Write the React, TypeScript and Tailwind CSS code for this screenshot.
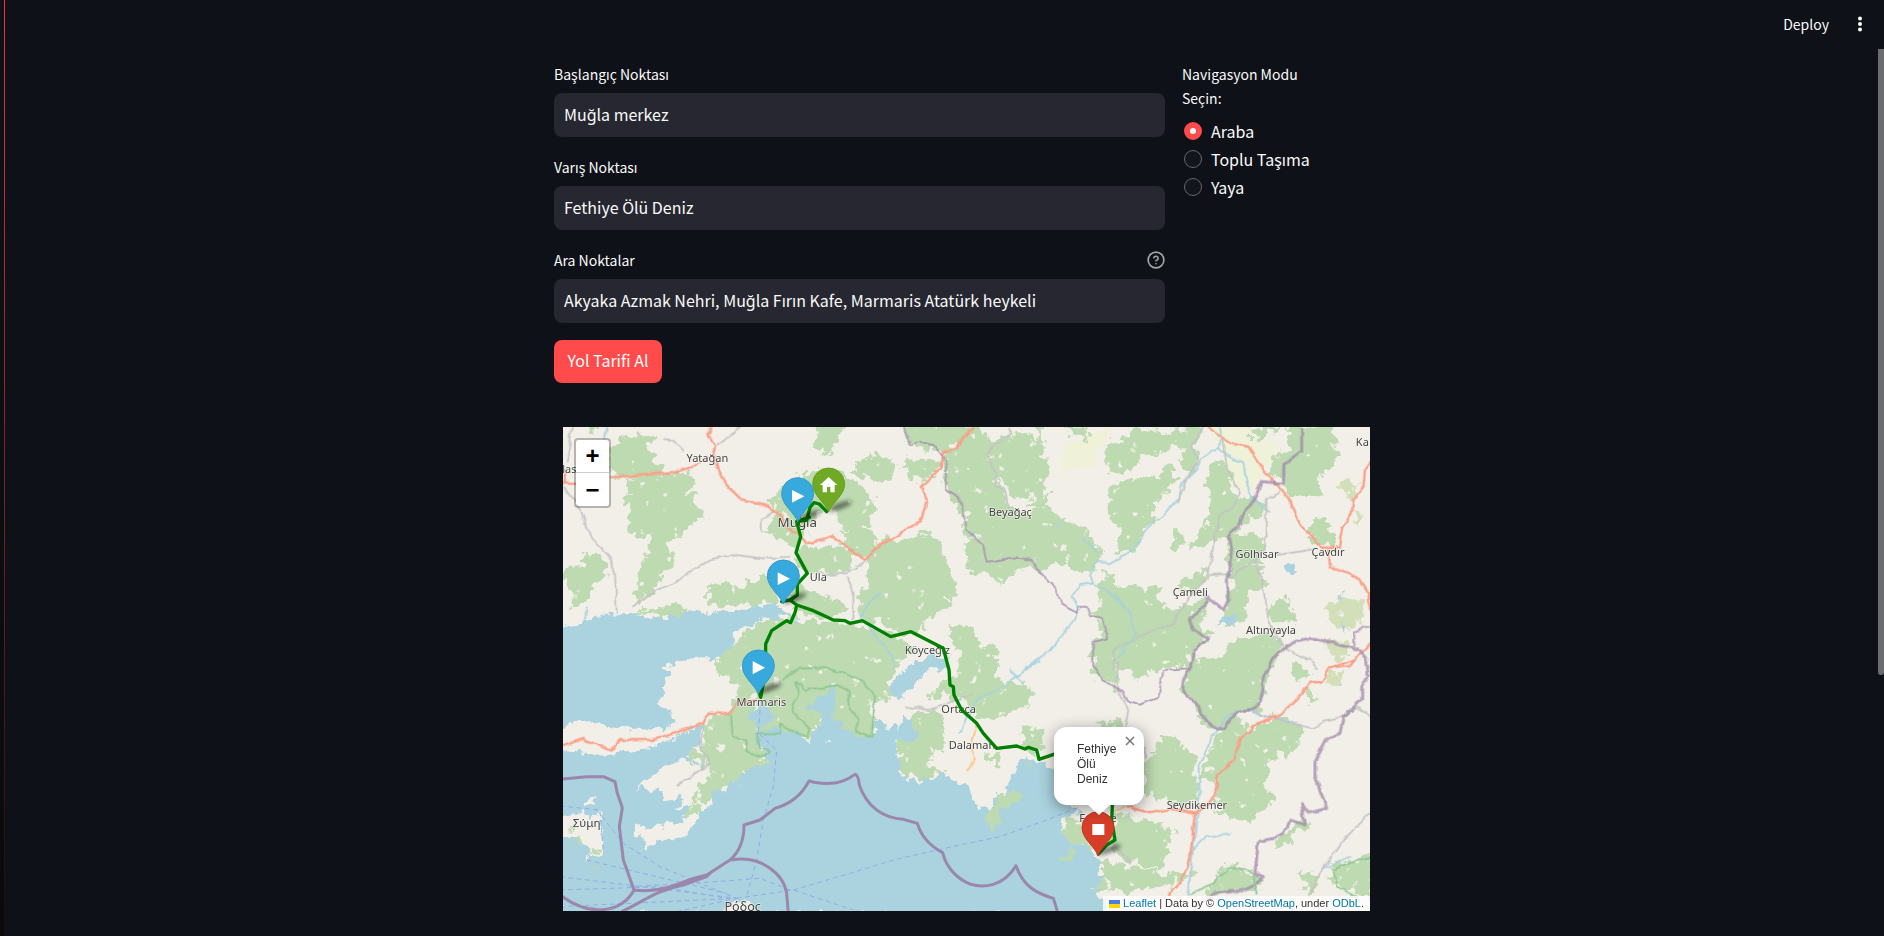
import React, { useState } from "react";

type Quad = [number, number, string];

const forests: Quad[] = [
  [0, 0, "M150,85L180,60L240,45L290,50L260,85L285,130L315,160L250,170L150,165Z M205,180L290,170L385,165L395,200L365,235L400,230L435,300L380,315L350,345L325,340L320,380L340,400L335,430L300,450L290,500L240,545L225,520L245,470L260,400L285,350L205,335L215,270L200,240Z M75,405L120,410L145,440L110,490L65,555L30,560L45,510L10,480L10,455L75,450Z M770,21L850,21L835,60L805,95L765,85L775,50Z"],
  [0, 0, "M885,150L925,110L1015,130L985,175L920,175Z M1030,145L1060,120L1140,130L1130,165L1060,175Z M690,190L770,150L850,165L905,210L940,250L925,310L880,330L840,310L830,260L760,280L720,380L680,370L620,330L650,300L640,240Z M850,335L895,325L930,335L965,375L940,410L900,410L850,370Z M730,385L870,390L880,450L800,455L745,450L700,440Z"],
  [0, 0, "M930,410L975,355L1050,360L1100,340L1140,360L1150,430L1190,490L1160,560L1100,590L1080,630L1020,640L960,600L890,590L900,520L935,480Z M450,500L560,500L590,475L640,475L650,545L540,555L445,560Z M700,500L760,520L830,540L860,570L800,590L700,560Z M240,575L370,560L375,590L300,592Z M90,21L110,21L100,50Z"],
  [0, 0, "M520,670L580,620L650,595L720,605L860,610L980,640L1060,680L985,780L1000,820L930,850L950,960L900,960L830,920L790,880L750,960L660,930L580,920L600,810L530,850L540,790L480,760L470,720Z M1030,21L1230,21L1230,60L1150,110L1120,75L1050,70Z M1155,120L1230,60L1230,350L1210,280L1160,210Z M1170,620L1230,610L1230,700L1190,690Z"],
  [0, 720, "M440,170L500,170L520,130L560,100L590,200L600,260L635,300L620,320L570,330L540,360L480,380L440,420L420,450L370,470L440,370L460,320L430,270Z M385,260L430,290L440,320L380,290Z M1110,100L1150,60L1230,40L1230,110L1120,110Z M1060,170L1100,150L1150,170L1150,250L1090,320L1150,340L1080,360L1060,330L1030,350L1010,300L1040,290L1010,250Z"],
  [1200, 0, "M0,21L60,21L90,70L80,110L110,190L130,240L180,290L260,265L310,300L370,330L425,400L400,450L360,450L290,415L260,445L180,440L150,460L120,490L90,465L25,450L20,350L0,260Z M0,615L40,620L50,680L105,685L110,750L0,750Z M90,75L150,55L190,40L240,80L265,160L240,230L170,235L140,190L100,160Z M235,21L250,80L230,90Z M320,21L375,21L380,60Z M200,255L270,222L250,262Z"],
  [1200, 0, "M480,60L530,30L620,40L720,21L700,90L650,80L600,90L540,100L520,150L445,155L440,80Z M445,200L560,170L600,190L620,210L580,250L560,330L520,390L470,390L490,320L450,280Z M600,170L620,135L655,180L610,195Z M660,110L690,80L720,120L690,150Z M740,180L770,130L790,130L820,200L830,240L880,240L920,260L840,320L800,350L745,330L760,250Z M870,21L950,21L920,50L870,50Z"],
  [1200, 0, "M985,21L1120,21L1125,130L1060,190L1090,220L1000,230L970,180L930,160L930,120L990,90Z M1060,310L1090,300L1125,340L1120,370L1060,375Z M640,340L660,330L670,380L640,375Z M690,370L740,320L800,310L780,350L700,385Z M810,345L905,350L905,420L850,440L810,470Z M830,450L900,440L915,490L860,520L850,610L800,610L800,560Z M920,570L980,540L1010,600L940,610Z M650,500L740,445L735,480L690,510Z"],
  [1200, 0, "M430,460L480,500L600,510L570,540L640,570L700,560L740,530L720,600L745,650L700,690L690,740L620,740L590,750L410,750L395,670L440,650L410,580Z M800,690L850,650L940,650L970,680L930,750L760,750Z"],
  [1200, 720, "M0,0L110,0L110,60L200,80L215,120L170,150L100,180L60,180L20,130L0,100Z M700,0L940,0L915,60L900,140L830,155L790,210L730,190L690,110L670,70Z M400,0L465,0L470,80L410,50Z M480,0L580,0L560,50L520,40Z M1000,10L1040,40L1010,60Z M1050,90L1070,130L1045,120Z M800,170L850,180L870,220L940,170L1000,190L1030,210L1000,260L930,290L910,370L940,420L870,480L780,460L770,350L720,350L750,280Z"],
  [1200, 720, "M600,230L650,240L700,290L710,420L640,430L560,400L550,300L600,270Z M410,190L480,180L490,200Z M470,460L520,480L560,490L640,510L620,560L600,630L500,600L450,560Z M430,610L500,620L620,650L700,640L590,680L500,690L450,680L400,690L430,650Z M320,480L360,480L390,560L310,540Z M950,530L1040,480L1040,500L950,560Z M740,700L780,640L810,620L880,640L900,660L860,690L760,700Z M1110,630L1230,590L1230,710L1170,690L1130,670Z M1020,640L1070,650L1070,690L1040,700Z M180,210L240,200L240,280L200,260Z M80,285L120,280L110,315Z"],
];

const scrub: Quad[] = [
  [1200, 0, "M1095,560L1140,530L1200,535L1215,580L1180,625L1130,620L1095,590Z M1100,670L1160,660L1170,700L1140,715L1100,700Z M1135,185L1195,185L1170,250L1145,215Z M1180,260L1210,290L1190,315Z"],
  [1200, 720, "M1105,40L1150,40L1145,75L1110,70Z"],
];

const farmland: Quad[] = [
  [1200, 0, "M370,50L450,25L440,60L410,90L405,140L320,145L310,175L300,120L320,70L370,60Z M740,21L870,21L870,60L960,70L925,130L890,200L850,220L810,180L790,90Z"],
];

const waters: Quad[] = [
  [0, 0, "M0,635L50,615L95,590L160,590L210,580L260,590L330,592L370,592L375,575L420,575L500,580L570,565L660,550L672,590L600,600L550,615L520,640L525,670L480,710L380,715L310,740L335,770L310,790L325,815L295,840L330,870L345,905L290,930L240,925L150,915L60,905L0,930Z"],
  [0, 0, "M0,980L60,1000L130,1010L210,990L290,975L330,960L345,970L370,935L430,920L420,950L425,990L395,975L380,1010L440,1035L360,1020L290,1055L235,1105L310,1110L325,1150L370,1120L350,1165L385,1165L370,1200L300,1222L225,1220L255,1290L300,1260L380,1250L430,1180L460,1120L530,1090L570,1050L635,1030L620,1000L580,960L600,925L565,900L570,870L600,850L630,870L650,920L660,920L750,960L790,880L740,870L760,840L830,800L815,890L890,945L940,950L950,900L1010,930L1030,880L1060,920L1070,950L1010,970L1015,1060L1040,1075L1090,1080L1150,1065L1230,1105L1240,1150L1290,1170L1300,1130L1330,1140L1350,1080L1400,1000L1490,1060L1500,1140L1570,1180L1510,1200L1505,1250L1570,1280L1600,1300L1630,1320L1620,1380L1600,1410L1640,1440L1640,1480L0,1480Z"],
  [0, 0, "M1070,720L1110,700L1170,710L1160,750L1080,760L1060,800L1040,830L1005,830L985,795L1030,760Z"],
  [1200, 0, "M980,440L1000,430L1015,460L985,465Z M765,632L780,602L825,583L828,612L790,612Z M1145,612L1165,625L1165,640Z M1128,532L1160,518L1155,532Z M290,315L302,320L296,330Z"],
];

const islands: Quad[] = [
  [0, 720, "M0,485L75,445L80,475L120,455L130,530L125,585L80,598L85,560L40,540L0,520Z M75,420L105,410L110,432L78,437Z M795,245L808,237L803,250Z M230,385L300,350L350,330L440,320L465,345L400,360L380,385L300,390Z M500,735L560,720L590,760L490,760Z"],
];

const islets: Quad[] = [
  [0, 720, "M20,510L60,500L40,515Z M30,550L70,538L60,555Z M75,580L125,560L110,585Z M100,612L120,622L108,626Z"],
  [1200, 720, "M70,460L120,420L160,385L195,390L180,420L120,450L125,490L95,520Z M200,300L212,310L205,328Z M290,590L340,565L345,592L300,592Z M305,520L370,500L400,560L320,550Z"],
  [0, 720, "M595,195L640,180L655,205L600,212Z"],
];

const greyRoads: Quad[] = [
  [0, 0, "M35,21L30,70L20,130 M15,200L60,270L90,350L140,400L165,460L170,580 M220,560L290,510L340,490L400,450L450,420L530,405L610,415L690,410 M310,60L340,62L370,95 M470,75L540,21 M770,455L800,465L860,460L915,425 M860,470L880,520L880,600 M605,335L605,300L640,275"],
  [0, 720, "M1035,140L1110,150L1160,130L1240,100 M430,190L420,260L450,310L390,350L350,380"],
  [1200, 0, "M150,21L155,40L95,80L85,110L110,170L105,195L135,205L145,270 M730,21L695,80L715,120L680,180L650,250 M790,60L800,140L840,220L820,260L780,290L765,350L745,465L680,540L640,610L580,630L530,655L460,690L460,750 M745,465L800,462 M950,405L1060,388 M810,475L850,440L890,425L915,520L925,610L980,690L1050,720L1075,750 M960,215L920,240L915,380L890,425"],
  [1200, 720, "M470,0L475,90L505,150L495,200 M870,150L940,175L1060,205L1100,180L1150,170L1190,140L1230,170 M1230,460L1150,540L1080,640L1050,700 M460,550L510,610 M550,260L560,300"],
];

const rivers: Quad[] = [
  [0, 0, "M965,520L930,545L900,590L950,650L990,700L1010,740 M140,21L135,55 M80,560L75,600 M675,580L720,615"],
  [1200, 0, "M780,21L785,60L770,85L720,120L710,150L660,200L655,235L600,295L560,325L520,390L450,430L410,425L390,465L400,490L455,520L510,580L525,640L475,715 M400,490L360,495L335,530L355,560L345,600L270,690L190,750 M770,85L850,130L860,190L880,240L930,280 M365,355L410,395"],
  [1200, 720, "M240,0L170,50L120,85L60,110L20,170L0,220 M150,30L190,70 M830,150L790,180L755,240L715,320L720,400L700,560L685,705 M700,570L740,530L810,520 M860,150L900,165L1000,185 M1170,590L1090,625"],
];

const mainRoads: Quad[] = [
  [0, 0, "M455,21L445,45L465,80L460,100L475,150L500,195L545,240L610,255L660,285L680,320L740,370L790,360L820,350L860,380L915,420L965,370L1015,350L1030,330L1060,320L1090,290L1100,240L1085,200L1145,140L1150,100L1190,85L1210,50L1240,25 M0,190L60,192 M150,172L250,165L350,155L400,140L440,115 M15,150L15,190"],
  [0, 720, "M0,260L70,237L155,272L180,240L275,240L310,232L390,203L430,190L445,157L505,163L530,130L590,120"],
  [1200, 0, "M740,21L810,70L865,80L895,125L940,185L990,240L1020,310L1080,380L1140,380L1150,320L1175,280L1180,240L1210,200L1215,150L1235,125 M1105,385L1110,440L1170,460L1200,480L1225,520L1230,570 M1115,745L1170,738L1200,700L1235,670"],
  [1200, 720, "M1180,0L1110,25L1085,65L1050,68L1000,130L960,165L880,195L870,220L840,235L820,300L770,345L770,390L750,430L705,458L700,500L690,600L660,670L625,705 M705,458L640,445L570,460L500,438"],
];

const provinces: Quad[] = [
  [0, 0, "M1030,21L1050,75L1080,65L1120,75L1150,110L1160,130L1155,210L1190,225L1210,258L1220,330L1250,358L1270,380L1280,425L1370,412L1415,420L1445,465L1490,510L1505,555L1550,578L1560,560L1580,560L1590,585L1625,595L1645,655L1598,665L1600,740L1630,780L1690,815L1700,840L1740,855L1795,832L1810,750L1890,745"],
  [1200, 0, "M1180,680L1180,635L1230,620"],
];

const regions: Quad[] = [
  [1200, 0, "M1025,21L1025,95L972,130L970,190L905,185L880,240L850,280L835,315L808,345L815,390L802,480L805,540L790,570L745,530L720,575L685,600L700,630L745,655L705,690L690,745C650,800 670,830 720,860C730,905 760,925 790,928C810,890 830,870 880,868C930,820 890,780 940,715C970,680 1010,655 1060,655L1200,690L1225,720"],
  [1200, 720, "M1220,0L1225,50L1205,80L1205,120L1150,170L1140,220L1100,235L1065,300L1065,350L1080,390L1100,445L1045,460L1025,430L1035,495L990,480L970,520L940,535L895,545L885,640L910,650L860,690L760,700L700,753"],
];

const maritime: Quad[] = [
  [0, 720, "M0,358L80,350L130,350L165,365L172,400L187,443L178,500L190,600L222,690C300,700 360,670 400,655L440,645L510,600C545,570 552,530 552,495L600,480L645,445C700,430 730,395 747,363Q830,385 885,343Q895,345 898,375C920,440 970,475 1030,478L1072,490C1085,535 1115,560 1148,578C1160,630 1200,660 1230,672C1270,685 1330,680 1368,617C1390,680 1430,700 1480,715L1492,753 M515,600C600,585 670,640 680,700L685,760 M222,690C190,750 100,780 0,705 M185,755C250,725 290,690 370,675L440,650L455,635"],
];

const ferries: Quad[] = [
  [0, 720, "M600,150L595,220L650,270L640,380L610,480L590,600L560,710 M110,450L190,550L300,620L530,715 M80,600L500,700 M0,650L530,715 M0,690L300,680L500,715 M0,740L530,715 M0,438L120,450L130,580 M700,690L870,640L1000,600L1200,555L1320,530L1460,480L1560,440 M530,715L700,690L880,750 M690,690L600,655L400,670L200,680 M350,755L530,715"],
];

const park: Quad[] = [
  [0, 720, "M670,60L720,25L800,25L850,40L905,60L945,110L935,230L890,215L895,180L870,150L865,90L830,75L740,90L705,65L715,100L695,155L750,210L745,235L660,195L660,220L590,220L600,265L630,275L610,290L560,275L560,240L515,225L510,165"],
  [1200, 720, "M690,700L760,670L810,620L880,640L890,700 M1235,590L1190,600L1120,630L1130,680L1200,720"],
];

const places: [string, number, number, number][] = [
  ["Yatağan", 442, 126, 33],
  ["las", 28, 160, 33],
  ["Muğla", 712, 321, 40],
  ["Ula", 775, 482, 33],
  ["Köyceğiz", 1102, 703, 33],
  ["Marmaris", 604, 859, 33],
  ["Ortaca", 1196, 880, 33],
  ["Dalaman", 1236, 988, 33],
  ["Σύμη", 80, 1220, 35],
  ["Ρόδος", 548, 1474, 38],
  ["Beyağaç", 1351, 288, 33],
  ["Ka", 2407, 77, 33],
  ["Gölhisar", 2091, 414, 33],
  ["Çavdır", 2304, 407, 33],
  ["Çameli", 1891, 527, 33],
  ["Altınyayla", 2133, 643, 33],
  ["Seydikemer", 1911, 1167, 33],
  ["Fethiye", 1614, 1205, 33],
];

function Layer({ items, ...rest }: { items: Quad[] } & React.SVGProps<SVGGElement>) {
  return (
    <g {...rest}>
      {items.map(([x, y, d], i) => (
        <path key={i} d={d} transform={`translate(${x} ${y})`} />
      ))}
    </g>
  );
}

function Pin({ x, y, fill, edge, children }: { x: number; y: number; fill: string; edge: string; children: React.ReactNode }) {
  return (
    <g transform={`translate(${x} ${y})`}>
      <path d="M0,0C8,-16 34,-32 66,-32C76,-26 56,-10 4,2Z" fill="#000" opacity="0.5" filter="url(#soft)" />
      <path
        d="M0,2C-10,-26 -48,-48 -48,-83A48,47 0 1 1 48,-83C48,-48 10,-26 0,2Z"
        fill={fill}
        stroke={edge}
        strokeWidth="3"
      />
      <g transform="translate(0 -81)" fill="#fff">{children}</g>
    </g>
  );
}

function MapDrawing() {
  return (
    <svg
      className="block h-full w-full"
      viewBox="9 21 2421 1452"
      preserveAspectRatio="xMinYMin slice"
      role="img"
      aria-label="Harita"
    >
      <defs>
        <filter id="rough" x="0" y="0" width="100%" height="100%">
          <feTurbulence type="fractalNoise" baseFrequency="0.03" numOctaves="4" seed="7" result="n" />
          <feDisplacementMap in="SourceGraphic" in2="n" scale="46" xChannelSelector="R" yChannelSelector="G" />
        </filter>
        <filter id="woods" x="0" y="0" width="100%" height="100%" colorInterpolationFilters="sRGB">
          <feTurbulence type="fractalNoise" baseFrequency="0.035" numOctaves="4" seed="7" result="n" />
          <feDisplacementMap in="SourceGraphic" in2="n" scale="56" xChannelSelector="R" yChannelSelector="G" result="shape" />
          <feTurbulence type="fractalNoise" baseFrequency="0.03" numOctaves="3" seed="21" result="m" />
          <feColorMatrix in="m" type="matrix" values="0 0 0 0 0  0 0 0 0 0  0 0 0 0 0  0 0 0 12 -8.6" result="holes" />
          <feComposite in="shape" in2="holes" operator="out" />
        </filter>
        <filter id="wiggle" x="0" y="0" width="100%" height="100%">
          <feTurbulence type="fractalNoise" baseFrequency="0.03" numOctaves="2" seed="3" result="n" />
          <feDisplacementMap in="SourceGraphic" in2="n" scale="16" xChannelSelector="R" yChannelSelector="G" />
        </filter>
        <filter id="soft" x="-50%" y="-50%" width="200%" height="200%">
          <feGaussianBlur stdDeviation="7" />
        </filter>
      </defs>
      <rect x="0" y="0" width="2440" height="1480" fill="#f2efe9" />
      <Layer items={farmland} fill="#eff1d9" />
      <g filter="url(#woods)">
        <rect x="-40" y="-40" width="2540" height="1580" fill="none" />
        <Layer items={forests} fill="#bddab1" stroke="#bddab1" strokeWidth="8" strokeLinejoin="round" />
        <Layer items={scrub} fill="#d3dfb9" />
      </g>
      <g filter="url(#rough)">
        <rect x="-40" y="-40" width="2540" height="1580" fill="none" />
        <Layer items={waters} fill="#aad3df" />
        <Layer items={islands} fill="#f2efe9" />
        <Layer items={islets} fill="#bddab1" />
      </g>
      <g filter="url(#wiggle)" fill="none" strokeLinejoin="round">
        <rect x="-40" y="-40" width="2540" height="1580" />
        <Layer items={rivers} stroke="#a6d1df" strokeWidth="5" />
        <Layer items={greyRoads} stroke="#c3c2c3" strokeWidth="5" />
        <Layer items={mainRoads} stroke="#fa9f87" strokeWidth="7" />
        <path d="M1250,915L1235,970L1245,1020L1220,1050 M1660,1178L1695,1155" stroke="#fbc78a" strokeWidth="6" />
        <Layer items={provinces} stroke="#a48cb0" strokeWidth="6" opacity="0.75" />
        <Layer items={regions} stroke="#a087a8" strokeWidth="9" opacity="0.75" />
        <Layer items={park} stroke="#8cc68d" strokeWidth="5" />
      </g>
      <Layer items={ferries} fill="none" stroke="#8ea4e8" strokeWidth="3" strokeDasharray="14 11" opacity="0.85" />
      <Layer items={maritime} fill="none" stroke="#9a87ab" strokeWidth="9" strokeLinejoin="round" />
      <g fontFamily='"Noto Sans", sans-serif' textAnchor="middle" fill="#444" stroke="#f7f5f0" strokeWidth="5" strokeOpacity="0.7" strokeLinejoin="round" paintOrder="stroke">
        {places.map(([name, x, y, size]) => (
          <text key={name} x={x} y={y} fontSize={size}>{name}</text>
        ))}
      </g>
      <g fill="none" stroke="#008000" strokeWidth="10" strokeLinejoin="round" strokeLinecap="round">
        <path d="M800,275L778,252L762,248L750,262L740,300L710,305L722,350L708,398L742,460L712,492L712,525L690,540L665,545 M716,305L748,292 M690,540L710,555L706,575L692,608L680,602L635,632L617,672L616,760L602,832L594,800" />
        <path d="M710,555L760,572L820,600L855,602L870,610L907,602L992,650L1053,635L1150,685L1167,750L1170,795L1180,800L1182,825L1205,870L1250,910L1270,940L1310,985L1370,978L1395,987L1405,982L1430,990L1437,1018L1490,1000" />
        <path d="M1658,1140L1655,1200L1665,1260L1640,1275L1615,1302" />
      </g>
      <Pin x={806} y={274} fill="#70aa24" edge="#669c20"><path d="M0,-22L26,2H18V24H5V8H-5V24H-18V2H-26Z" /></Pin>
      <Pin x={713} y={303} fill="#38a9dc" edge="#3399c8"><path d="M-17,-12L20,7L-17,26Z" /></Pin>
      <Pin x={670} y={550} fill="#38a9dc" edge="#3399c8"><path d="M-17,-12L20,7L-17,26Z" /></Pin>
      <Pin x={595} y={820} fill="#38a9dc" edge="#3399c8"><path d="M-17,-16L20,4L-17,24Z" /></Pin>
      <Pin x={1614} y={1305} fill="#d63e2a" edge="#c03726"><path d="M-17,-12H19V21H-17Z" /></Pin>
    </svg>
  );
}

function RouteMap() {
  const [open, setOpen] = useState(true);
  return (
    <section className="relative ml-[9px] mt-11 h-[484px] w-[calc(100%+32px)] overflow-hidden bg-[#f2efe9] font-['Liberation_Sans',sans-serif]">
      <MapDrawing />
      <div className="absolute left-[11px] top-[11px] flex flex-col rounded border-2 border-black/25 bg-clip-padding">
        <button aria-label="Yakınlaştır" className="flex h-[33px] w-[33px] items-center justify-center rounded-t-sm border-b border-[#ccc] bg-white text-2xl font-bold leading-none text-black">+</button>
        <button aria-label="Uzaklaştır" className="flex h-[33px] w-[33px] items-center justify-center rounded-b-sm bg-white text-2xl font-bold leading-none text-black">−</button>
      </div>
      {open && (
        <div className="absolute left-[491px] top-[300px] h-[78px] w-[90px]">
          <svg className="absolute left-[31px] top-[77px]" width="28" height="12" viewBox="0 0 28 12" aria-hidden="true">
            <path d="M2 0H26L14 11Z" fill="#fff" />
          </svg>
          <div className="h-full rounded-[13px] bg-white py-[15px] pl-[23px] pr-6 text-xs leading-[15px] text-[#333] shadow-[0_3px_15px_rgba(0,0,0,0.4)]">
            Fethiye Ölü Deniz
          </div>
          <button aria-label="Kapat" onClick={() => setOpen(false)} className="absolute right-0 top-0 flex h-7 w-7 items-center justify-center text-[#757575]">
            <svg width="10" height="10" viewBox="0 0 10 10" aria-hidden="true">
              <path d="M1 1L9 9M9 1L1 9" stroke="currentColor" strokeWidth="1.5" />
            </svg>
          </button>
        </div>
      )}
      <div className="absolute bottom-0 right-0 flex h-[15px] items-center whitespace-pre bg-white/80 px-[6px] text-[11px] leading-[15px] text-[#333]">
        <svg className="mr-[3px]" width="11" height="8" viewBox="0 0 11 8" aria-hidden="true">
          <path fill="#4c7be1" d="M0 0h11v4H0z" />
          <path fill="#ffd500" d="M0 4h11v4H0z" />
        </svg>
        <a href="#leaflet" className="text-[#0078a8]">Leaflet</a>
        <span> | Data by © </span>
        <a href="#osm" className="text-[#0078a8]">OpenStreetMap</a>
        <span>, under </span>
        <a href="#odbl" className="text-[#0078a8]">ODbL</a>
        <span>.</span>
      </div>
    </section>
  );
}

function TextField({ id, label, value, help }: { id: string; label: string; value: string; help?: boolean }) {
  return (
    <div>
      <div className="mb-[7px] flex h-6 items-center justify-between">
        <label htmlFor={id} className="text-sm leading-6">{label}</label>
        {help && (
          <button type="button" aria-label="Yardım" className="text-[#a3a4a6]">
            <svg width="18" height="18" viewBox="0 0 24 24" fill="none" stroke="currentColor" strokeWidth="2.2" strokeLinecap="round" strokeLinejoin="round" aria-hidden="true">
              <circle cx="12" cy="12" r="10.5" />
              <path d="M9.09 9a3 3 0 0 1 5.83 1c0 2-3 3-3 3M12 17h.01" />
            </svg>
          </button>
        )}
      </div>
      <input id={id} type="text" defaultValue={value} className="block h-11 w-full rounded-lg bg-[#262730] px-[10px] pb-[3px] text-base text-[#fafafa] outline-none" />
    </div>
  );
}

const modes = ["Araba", "Toplu Taşıma", "Yaya"];

export default function App() {
  const [mode, setMode] = useState("Araba");
  return (
    <div className="relative flex min-h-screen overflow-hidden bg-[#0e1117] font-['Noto_Sans_CJK_SC','Noto_Sans',sans-serif] text-[#fafafa]">
      <aside className="w-1 shrink-0 bg-linear-to-b from-[#0e1117] to-[#0a0a0a]" />
      <div className="w-px shrink-0 bg-linear-to-b from-[#ff2b4b] to-[#1a0c10]" />
      <main className="min-w-0 flex-1 pb-[25px] pt-[62px]">
        <div className="mx-auto w-full max-w-[775px]">
          <form className="flex gap-[17px]" onSubmit={(e) => e.preventDefault()}>
            <div className="flex flex-1 flex-col">
              <div className="mb-[17px] flex flex-col gap-[18px]">
                <TextField id="start" label="Başlangıç Noktası" value="Muğla merkez" />
                <TextField id="end" label="Varış Noktası" value="Fethiye Ölü Deniz" />
                <TextField id="stops" label="Ara Noktalar" value="Akyaka Azmak Nehri, Muğla Fırın Kafe, Marmaris Atatürk heykeli" help />
              </div>
              <button type="submit" className="h-[43px] w-[108px] rounded-lg bg-[#ff4b4b] pb-[3px] text-base leading-6 text-white">Yol Tarifi Al</button>
            </div>
            <fieldset className="w-[147px]">
              <legend className="mb-[7px] text-sm leading-6">Navigasyon Modu Seçin:</legend>
              {modes.map((m) => (
                <label key={m} className="flex h-7 items-center gap-[9px] pl-[2px] text-base">
                  <input
                    type="radio"
                    name="mode"
                    checked={mode === m}
                    onChange={() => setMode(m)}
                    className="h-[18px] w-[18px] shrink-0 appearance-none rounded-full border border-[#65676c] bg-[#12151c] checked:border-[6px] checked:border-[#ff4b4b] checked:bg-[#fafafa]"
                  />
                  {m}
                </label>
              ))}
            </fieldset>
          </form>
          <RouteMap />
        </div>
      </main>
      <div className="w-[6px] shrink-0 pt-[49px]">
        <div className="h-[626px] rounded-b-full bg-[#6b6c70]" />
      </div>
      <header className="absolute right-0 top-0 flex h-[47px] items-center gap-7 pr-[21px]">
        <button className="text-sm">Deploy</button>
        <button aria-label="Menü">
          <svg width="6" height="18" viewBox="0 0 6 18" fill="#fafafa" aria-hidden="true">
            <circle cx="3" cy="3.5" r="2" />
            <circle cx="3" cy="9" r="2" />
            <circle cx="3" cy="14.5" r="2" />
          </svg>
        </button>
      </header>
    </div>
  );
}
